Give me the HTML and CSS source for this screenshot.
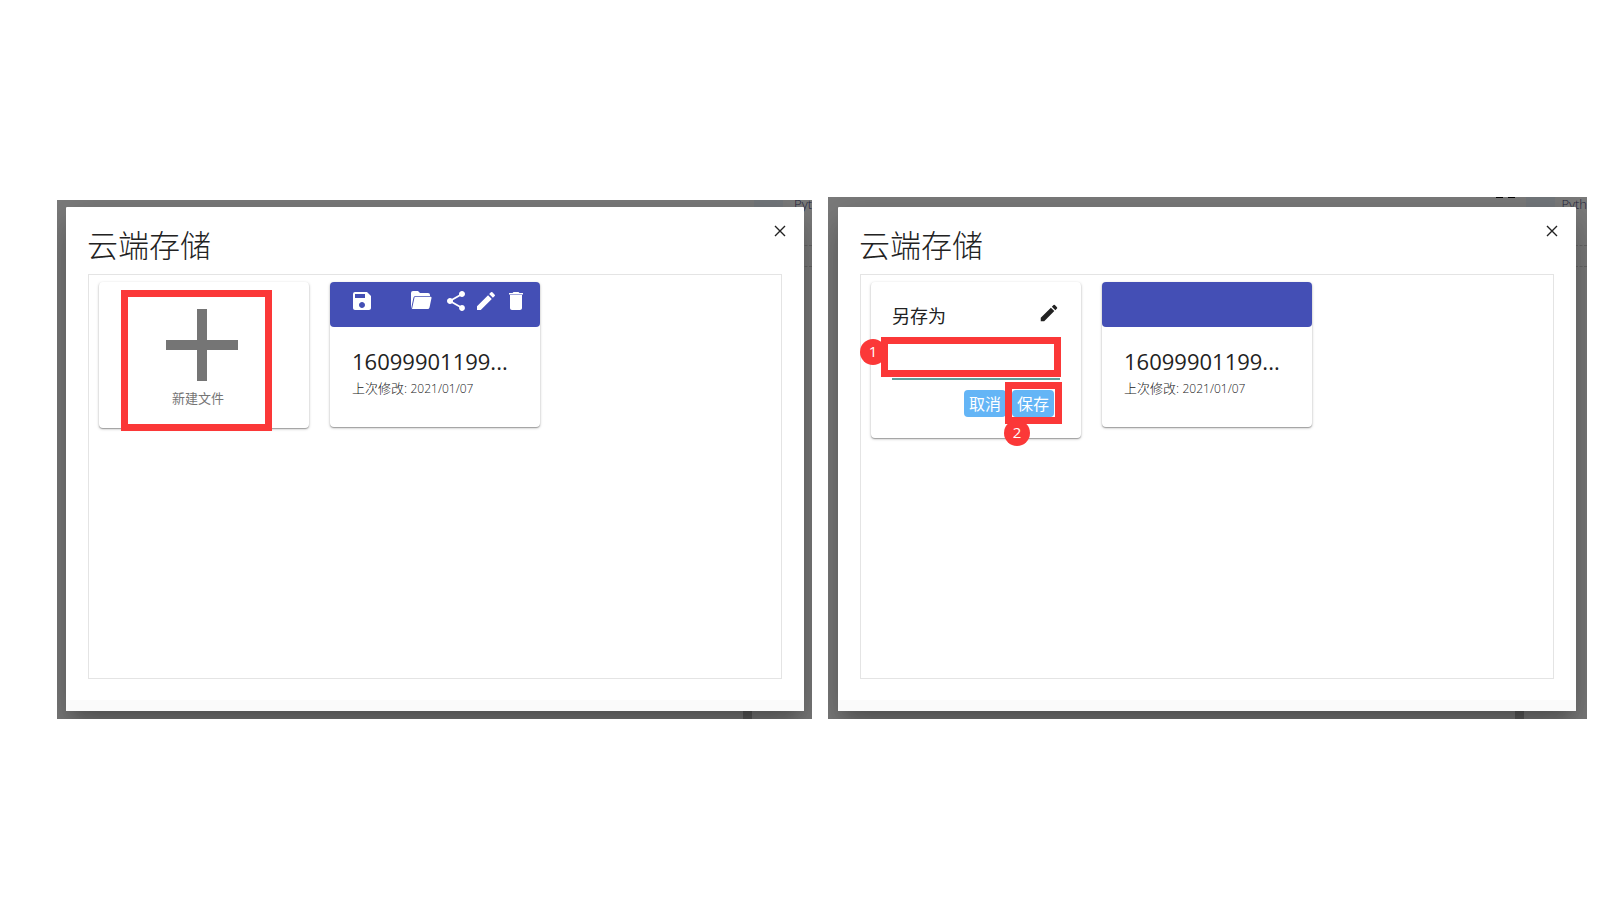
FILE: index.html
```html
<!DOCTYPE html>
<html lang="zh-CN">
<head>
<meta charset="utf-8">
<title>云端存储</title>
<link rel="stylesheet" href="styles.css">
</head>
<body>
<main class="board">
  <section class="frame frame-list">
    <div class="tab"></div><span class="behind">Pyt</span><div class="dashes"></div><div class="foot-tab"></div>
    <div class="modal">
      <button class="close" aria-label="关闭"><svg viewBox="0 0 12 12"><path d="M1 1l10 10M11 1L1 11"/></svg></button>
      <div class="modal-body">
        <h1 class="title">云端存储</h1>
        <div class="panel">
          <button class="card new-file">
            <svg class="plus" viewBox="0 0 72 72"><path d="M31 0h10v31h31v10H41v31H31V41H0V31h31z"/></svg>
            <span>新建文件</span>
            <i class="mark mark-new"></i>
          </button>
          <article class="card">
            <div class="card-head">
              <button class="tool save" aria-label="保存"><svg viewBox="0 0 24 24"><path d="M17 3H5a2 2 0 0 0-2 2v14c0 1.100.9 2 2 2h14c1.100 0 2-.9 2-2V7l-4-4zm-5 16c-1.660 0-3-1.340-3-3s1.340-3 3-3 3 1.340 3 3-1.340 3-3 3zm3-10H5V5h10v4z"/></svg></button>
              <button class="tool open" aria-label="打开"><svg viewBox="0 0 24 24"><path d="M2 20V4a2 2 0 0 1 2-2h5l2 2h8a2 2 0 0 1 2 2v1H6.500a2 2 0 0 0-2 1.500L2 20z"/><path d="M5.500 8.500a1 1 0 0 1 1-.8H21.500a1 1 0 0 1 1 1.200L20.500 18.500a2 2 0 0 1-2 1.500H3z"/></svg></button>
              <button class="tool share" aria-label="分享"><svg viewBox="0 0 24 24"><path d="M18 16.080c-.76 0-1.440.3-1.960.77L8.910 12.700c.05-.23.09-.46.09-.7s-.04-.47-.09-.7l7.050-4.110c.54.5 1.250.81 2.040.81 1.660 0 3-1.340 3-3s-1.340-3-3-3-3 1.340-3 3c0 .24.04.47.09.7L8.040 9.810C7.500 9.310 6.790 9 6 9c-1.660 0-3 1.340-3 3s1.340 3 3 3c.79 0 1.500-.31 2.040-.81l7.120 4.160c-.05.21-.08.43-.08.65 0 1.610 1.310 2.920 2.920 2.920s2.920-1.310 2.920-2.920-1.310-2.920-2.920-2.920z"/></svg></button>
              <button class="tool" aria-label="重命名"><svg viewBox="0 0 24 24"><path d="M3 17.250V21h3.750L17.810 9.940l-3.750-3.750L3 17.250zM20.710 7.040a1 1 0 0 0 0-1.410l-2.340-2.340a1 1 0 0 0-1.410 0l-1.830 1.830 3.750 3.750 1.830-1.830z"/></svg></button>
              <button class="tool" aria-label="删除"><svg viewBox="0 0 24 24"><path d="M6 19c0 1.100.9 2 2 2h8c1.100 0 2-.9 2-2V6H6v13zM19 4h-3.500l-1-1h-5l-1 1H5v1.500h14V4z"/></svg></button>
            </div>
            <div class="card-info">
              <h2 class="name">16099901199...</h2>
              <p class="meta">上次修改: <time>2021/01/07</time></p>
            </div>
          </article>
        </div>
      </div>
      <div class="modal-foot"></div>
    </div>
  </section>

  <section class="frame frame-save">
    <div class="tab"></div><span class="behind">Pyth</span><div class="dashes"></div><div class="foot-tab"></div>
    <div class="glyph-bits"></div>
    <div class="modal">
      <button class="close" aria-label="关闭"><svg viewBox="0 0 12 12"><path d="M1 1l10 10M11 1L1 11"/></svg></button>
      <div class="modal-body">
        <h1 class="title">云端存储</h1>
        <div class="panel">
          <form class="card save-as">
            <div class="save-top">
              <label for="file-name">另存为</label>
              <svg class="pencil" viewBox="0 0 24 24"><path d="M3 17.250V21h3.750L17.810 9.940l-3.750-3.750L3 17.250zM20.710 7.040a1 1 0 0 0 0-1.410l-2.340-2.340a1 1 0 0 0-1.410 0l-1.830 1.830 3.750 3.750 1.830-1.830z"/></svg>
            </div>
            <input class="field" id="file-name" type="text">
            <div class="actions">
              <button class="btn" type="button">取消</button>
              <button class="btn" type="button">保存</button>
            </div>
            <i class="mark mark-field"></i><i class="mark mark-save"></i>
            <b class="badge badge-one">1</b><b class="badge badge-two">2</b>
          </form>
          <article class="card">
            <div class="card-head"></div>
            <div class="card-info">
              <h2 class="name">16099901199...</h2>
              <p class="meta">上次修改: <time>2021/01/07</time></p>
            </div>
          </article>
        </div>
      </div>
      <div class="modal-foot"></div>
    </div>
  </section>
</main>
</body>
</html>
```
FILE: styles.css
```css
* { box-sizing: border-box; }

body {
  margin: 0;
  background: #fff;
  color: #222;
  font-family: "Open Sans", "Noto Sans CJK SC", sans-serif;
}

button { font: inherit; border: 0; padding: 0; background: none; color: inherit; }
h1, h2, p { margin: 0; font-weight: 400; }
svg { display: block; }

.board {
  display: flex;
  align-items: flex-end;
  gap: 16px;
  padding: 197px 13px 24px 57px;
}

.frame {
  position: relative;
  flex: 1 1 0;
  overflow: hidden;
  min-width: 0;
  background: #7c7c7c;
}
.frame-list { padding: 7px 8px 8px 9px; }
.frame-save { padding: 10px 11px 8px 10px; }

/* Parts of the page dimmed behind the dialog */
.tab { position: absolute; top: 0; right: 29px; width: 29px; height: 12px; background: #75797d; }
.frame-save .tab { right: 32px; }
.behind {
  position: absolute;
  top: -5px;
  right: 0;
  color: #25253c;
  font-size: 13px;
  font-weight: 300;
  line-height: 18px;
}
.frame-save .behind { top: -2px; }
.dashes {
  position: absolute;
  top: 45px;
  right: 0;
  width: 12px;
  height: 22px;
  border: dashed #686868;
  border-width: 1px 0;
}
.frame-save .dashes { top: 48px; }
.foot-tab {
  position: absolute;
  bottom: 0;
  right: 60px;
  width: 9px;
  height: 8px;
  background: #5c5c5c;
}
.frame-save .foot-tab { right: 63px; }
.glyph-bits {
  position: absolute;
  top: 0;
  right: 72px;
  width: 19px;
  height: 1px;
  border: solid #000;
  border-width: 0 7px;
}

.modal {
  position: relative;
  background: #fff;
  border-radius: 1px;
  box-shadow: 0 24px 38px 3px rgba(0, 0, 0, .14), 0 9px 46px 8px rgba(0, 0, 0, .12), 0 11px 15px -7px rgba(0, 0, 0, .2);
}
.modal-body { padding: 18px 22px 21px; }
.modal-foot { height: 11px; background: #fafafa; }
.close { position: absolute; top: 18px; right: 18px; }
.close svg { width: 12px; height: 12px; fill: none; stroke: #222; stroke-width: 1.400; }

.title {
  margin: 0 0 9px -1px;
  font-size: 31px;
  font-weight: 300;
  line-height: 40px;
}

.panel {
  display: flex;
  flex-wrap: wrap;
  align-items: flex-start;
  align-content: flex-start;
  gap: 21px;
  min-height: 405px;
  padding: 7px 10px;
  border: 1px solid #e4e4e4;
}

.card {
  position: relative;
  width: 210px;
  background: #fff;
  border-radius: 4px;
  box-shadow: 0 1px 3px rgba(0, 0, 0, .25), 0 1px 1px rgba(0, 0, 0, .25);
}
.new-file {
  display: flex;
  flex-direction: column;
  align-items: center;
  gap: 7px;
  padding: 27px 12px 20px 0;
  color: #757575;
  font-size: 13px;
  line-height: 20px;
}
.plus { width: 72px; height: 72px; margin-left: 7px; fill: #757575; }

.card-head {
  display: flex;
  align-items: flex-start;
  height: 45px;
  padding: 7px 12px 0 20px;
  background: #444fb5;
  border-radius: 4px;
  color: #fff;
}
.tool { width: 24px; margin-right: 6px; }
.tool:last-child { margin-right: 0; }
.tool svg { width: 24px; height: 24px; fill: #fff; }
.save { margin-right: 35px; }
.open { margin-right: 11px; }

.card-info { padding: 18px 22px 27px; }
.name { font-size: 22px; line-height: 32px; white-space: nowrap; }
.meta { font-size: 13px; font-weight: 300; line-height: 22px; }
.meta time { font-size: 12px; }

.save-as { padding: 19px 21px 21px; }
.save-top { display: flex; align-items: center; justify-content: space-between; font-size: 18px; line-height: 30px; }
.pencil { width: 22px; height: 22px; margin-bottom: 6px; fill: #222; }
.field {
  display: block;
  width: 100%;
  height: 49px;
  border: 0;
  border-bottom: 2px solid #5e9f9b;
  outline: 0;
  background: none;
  font: inherit;
}
.actions { display: flex; justify-content: flex-end; gap: 6px; padding: 10px 6px 0 0; }
.btn {
  width: 42px;
  height: 27px;
  padding-top: 1px;
  border-radius: 4px;
  background: #64b5f6;
  color: #fff;
  font-size: 16px;
  line-height: 26px;
}

/* Callouts drawn over the dialogs */
.mark { position: absolute; border: 7px solid #fb3838; }
.mark-new { left: 22px; top: 8px; width: 151px; height: 141px; }
.mark-field { left: 10px; top: 55px; width: 180px; height: 40px; }
.mark-save { left: 134px; top: 100px; width: 57px; height: 42px; }
.badge {
  position: absolute;
  width: 26px;
  height: 26px;
  border-radius: 50%;
  background: #fb3838;
  color: #fff;
  font-size: 15px;
  font-weight: 400;
  line-height: 24px;
  text-align: center;
}
.badge-one { left: -11px; top: 57px; }
.badge-two { left: 133px; top: 138px; }
```
